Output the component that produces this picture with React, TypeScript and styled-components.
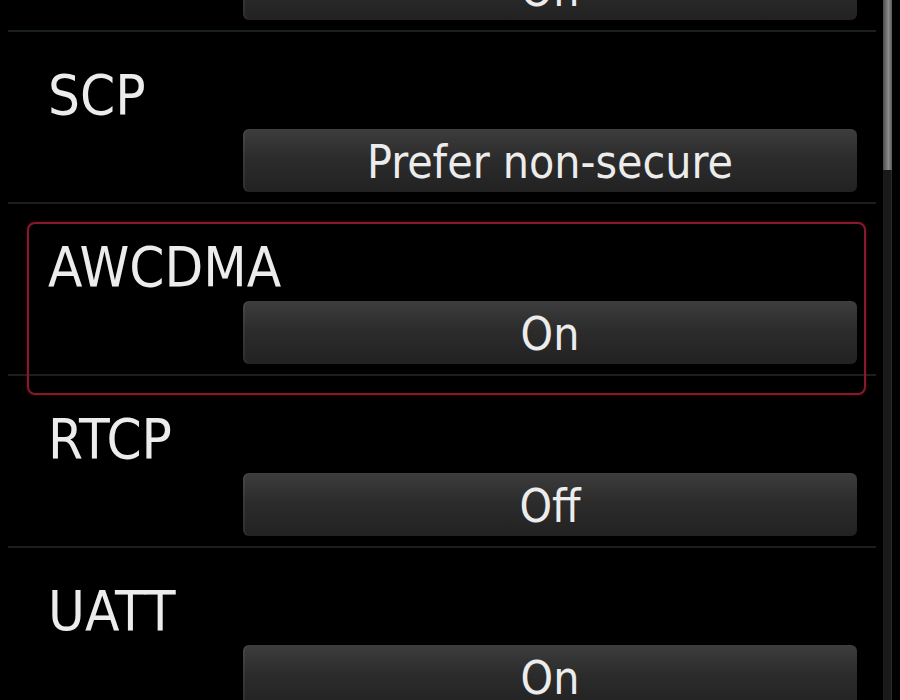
import styled, { createGlobalStyle } from 'styled-components';

const GlobalStyle = createGlobalStyle`
  html, body {
    margin: 0;
    padding: 0;
    background: #000;
    overflow: hidden;
  }
`;

const colors = {
  bg: '#000000',
  text: '#ececec',
  separator: '#1a201e',
  focus: '#861a2c',
  buttonTop: '#3d3d3d',
  buttonMid: '#2c2c2c',
  buttonBottom: '#222222',
};

const Screen = styled.div`
  width: 900px;
  height: 700px;
  display: flex;
  background: ${colors.bg};
  overflow: hidden;
  font-family: 'DejaVu Sans Condensed', 'DejaVu Sans', sans-serif;
  font-stretch: condensed;
`;

const Viewport = styled.div`
  flex: 1;
  height: 100%;
  overflow: hidden;
`;

// scroll offset of the list
const SettingsList = styled.ul<{ scrollTop: number }>`
  list-style: none;
  margin: ${({ scrollTop }) => -scrollTop}px 7px 0 8px;
  padding: 0;
`;

const SettingRow = styled.li`
  position: relative;
  display: flex;
  flex-direction: column;
  padding: 35px 19px 10px 40px;
  border-bottom: 2px solid ${colors.separator};
`;

const FocusFrame = styled.div`
  position: absolute;
  top: 18px;
  left: 19px;
  right: 10px;
  bottom: -21px;
  border: 2px solid ${colors.focus};
  border-radius: 8px;
  box-shadow: 0 0 3px rgba(150, 20, 45, 0.55);
  pointer-events: none;
`;

const SettingLabel = styled.div`
  position: relative;
  height: 56px;
  font-size: 56px;
  line-height: 56px;
  color: ${colors.text};
  white-space: nowrap;
`;

const ValueButton = styled.button`
  position: relative;
  margin: 6px 0 0 195px;
  height: 63px;
  padding: 3px 0 0;
  display: flex;
  align-items: center;
  justify-content: center;
  border: none;
  border-radius: 6px;
  background: linear-gradient(
    ${colors.buttonTop} 0%,
    ${colors.buttonMid} 45%,
    ${colors.buttonBottom} 100%
  );
  box-shadow: inset 2px 0 0 rgba(255, 255, 255, 0.06);
  font-family: inherit;
  font-stretch: condensed;
  font-size: 46px;
  line-height: 46px;
  color: ${colors.text};
  white-space: nowrap;
`;

const ScrollColumn = styled.div`
  width: 17px;
  height: 100%;
  display: flex;
`;

const ScrollTrack = styled.div`
  width: 9px;
  height: 100%;
  background: #1a1a1a;
  box-shadow: inset -1px 0 0 #2a2a2a;
`;

const ScrollThumb = styled.div`
  width: 100%;
  background: linear-gradient(90deg, #4a4a4a, #8c8c8c 60%, #5a5a5a);
`;

interface Setting {
  label: string;
  value: string;
  focused?: boolean;
}

// first row is scrolled mostly out of view, its label is above the top edge
const settings: Setting[] = [
  { label: '', value: 'On' },
  { label: 'SCP', value: 'Prefer non-secure' },
  { label: 'AWCDMA', value: 'On', focused: true },
  { label: 'RTCP', value: 'Off' },
  { label: 'UATT', value: 'On' },
];

export default function App() {
  return (
    <Screen>
      <GlobalStyle />
      <Viewport>
        <SettingsList scrollTop={140}>
          {settings.map((s, i) => (
            <SettingRow key={i}>
              {s.focused && <FocusFrame />}
              <SettingLabel>{s.label}</SettingLabel>
              <ValueButton>{s.value}</ValueButton>
            </SettingRow>
          ))}
        </SettingsList>
      </Viewport>
      <ScrollColumn>
        <ScrollTrack>
          <ScrollThumb style={{ height: 170 }} />
        </ScrollTrack>
      </ScrollColumn>
    </Screen>
  );
}
